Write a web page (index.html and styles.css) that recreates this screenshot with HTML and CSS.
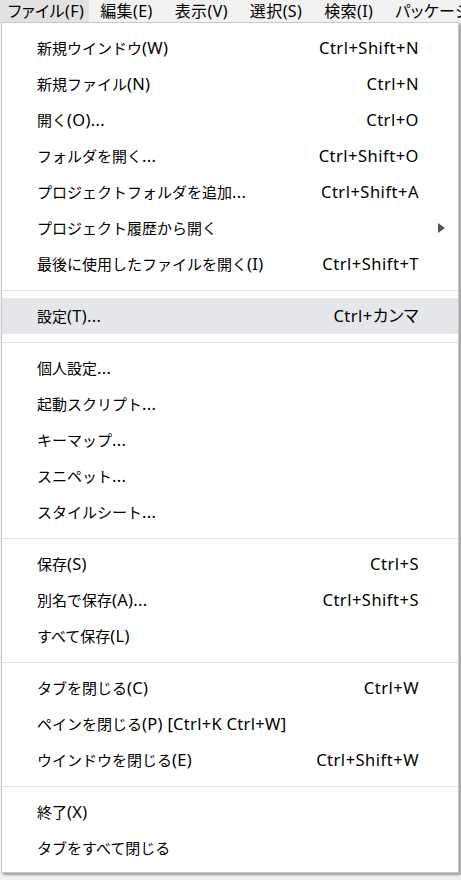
FILE: index.html
```html
<!DOCTYPE html>
<html lang="ja">
<head>
<meta charset="utf-8">
<title>Menu</title>
<link rel="stylesheet" href="styles.css">
</head>
<body>
<div class="menubar">
  <div class="mb-item active">ファイル(F)</div>
  <div class="mb-item">編集(E)</div>
  <div class="mb-item">表示(V)</div>
  <div class="mb-item">選択(S)</div>
  <div class="mb-item">検索(I)</div>
  <div class="mb-item">パッケージ</div>
</div>
<div class="menu">
  <div class="row"><span class="label">新規ウインドウ<span class="lat">(W)</span></span><span class="key">Ctrl+Shift+N</span></div>
  <div class="row"><span class="label">新規ファイル<span class="lat">(N)</span></span><span class="key">Ctrl+N</span></div>
  <div class="row"><span class="label">開く<span class="lat">(O)...</span></span><span class="key">Ctrl+O</span></div>
  <div class="row"><span class="label">フォルダを開く<span class="lat">...</span></span><span class="key">Ctrl+Shift+O</span></div>
  <div class="row"><span class="label">プロジェクトフォルダを追加<span class="lat">...</span></span><span class="key">Ctrl+Shift+A</span></div>
  <div class="row"><span class="label">プロジェクト履歴から開く</span><span class="arrow"></span></div>
  <div class="row"><span class="label">最後に使用したファイルを開く<span class="lat">(I)</span></span><span class="key">Ctrl+Shift+T</span></div>
  <div class="sep"></div>
  <div class="row hover"><span class="label">設定<span class="lat">(T)...</span></span><span class="key">Ctrl+カンマ</span></div>
  <div class="sep"></div>
  <div class="row"><span class="label">個人設定<span class="lat">...</span></span></div>
  <div class="row"><span class="label">起動スクリプト<span class="lat">...</span></span></div>
  <div class="row"><span class="label">キーマップ<span class="lat">...</span></span></div>
  <div class="row"><span class="label">スニペット<span class="lat">...</span></span></div>
  <div class="row"><span class="label">スタイルシート<span class="lat">...</span></span></div>
  <div class="sep"></div>
  <div class="row"><span class="label">保存<span class="lat">(S)</span></span><span class="key">Ctrl+S</span></div>
  <div class="row"><span class="label">別名で保存<span class="lat">(A)...</span></span><span class="key">Ctrl+Shift+S</span></div>
  <div class="row"><span class="label">すべて保存<span class="lat">(L)</span></span></div>
  <div class="sep"></div>
  <div class="row"><span class="label">タブを閉じる<span class="lat">(C)</span></span><span class="key">Ctrl+W</span></div>
  <div class="row"><span class="label">ペインを閉じる<span class="lat">(P) [Ctrl+K Ctrl+W]</span></span></div>
  <div class="row"><span class="label">ウインドウを閉じる<span class="lat">(E)</span></span><span class="key">Ctrl+Shift+W</span></div>
  <div class="sep"></div>
  <div class="row"><span class="label">終了<span class="lat">(X)</span></span></div>
  <div class="row"><span class="label">タブをすべて閉じる</span></div>
</div>
</body>
</html>
```
FILE: styles.css
```css
html, body {
  margin: 0;
  padding: 0;
}
body {
  width: 461px;
  height: 880px;
  overflow: hidden;
  background: #f0f0f0;
  font-family: "Noto Sans", "Noto Sans CJK JP", sans-serif;
  font-size: 15px;
  color: #000;
}
.menubar {
  display: flex;
  height: 22px;
  background: #f2f2f2;
  font-size: 16px;
  font-feature-settings: "palt";
}
.mb-item {
  display: flex;
  align-items: center;
  padding: 0 11px 0 9px;
  margin-right: 2px;
  white-space: nowrap;
  line-height: 1;
  letter-spacing: 0.4px;
}
.mb-item.active {
  background: #e2e2e2;
  padding-left: 8px;
  padding-right: 5px;
}
.menu {
  margin-left: 1px;
  width: 456px;
  background: #fff;
  border: 1px solid #c9c9c9;
  padding: 7px 0 6px;
  box-shadow: 2px 2px 2px rgba(0, 0, 0, 0.35);
}
.row {
  display: flex;
  align-items: center;
  justify-content: space-between;
  height: 36px;
  padding: 0 40px 0 35px;
  white-space: nowrap;
  line-height: 1;
}
.label {
  font-size: 15px;
}
.lat {
  font-size: 16.5px;
  letter-spacing: 0.3px;
}
.row.hover {
  background: #e6e7eb;
}
.key {
  text-align: right;
  font-size: 16.5px;
  letter-spacing: 0.5px;
  margin-right: -1px;
  font-feature-settings: "palt";
}
.arrow {
  width: 0;
  height: 0;
  border-top: 5px solid transparent;
  border-bottom: 5px solid transparent;
  border-left: 7px solid #555;
  margin-right: -27px;
}
.sep {
  height: 1px;
  background: #e3e3e3;
  margin: 8px 0 7px;
}
```
